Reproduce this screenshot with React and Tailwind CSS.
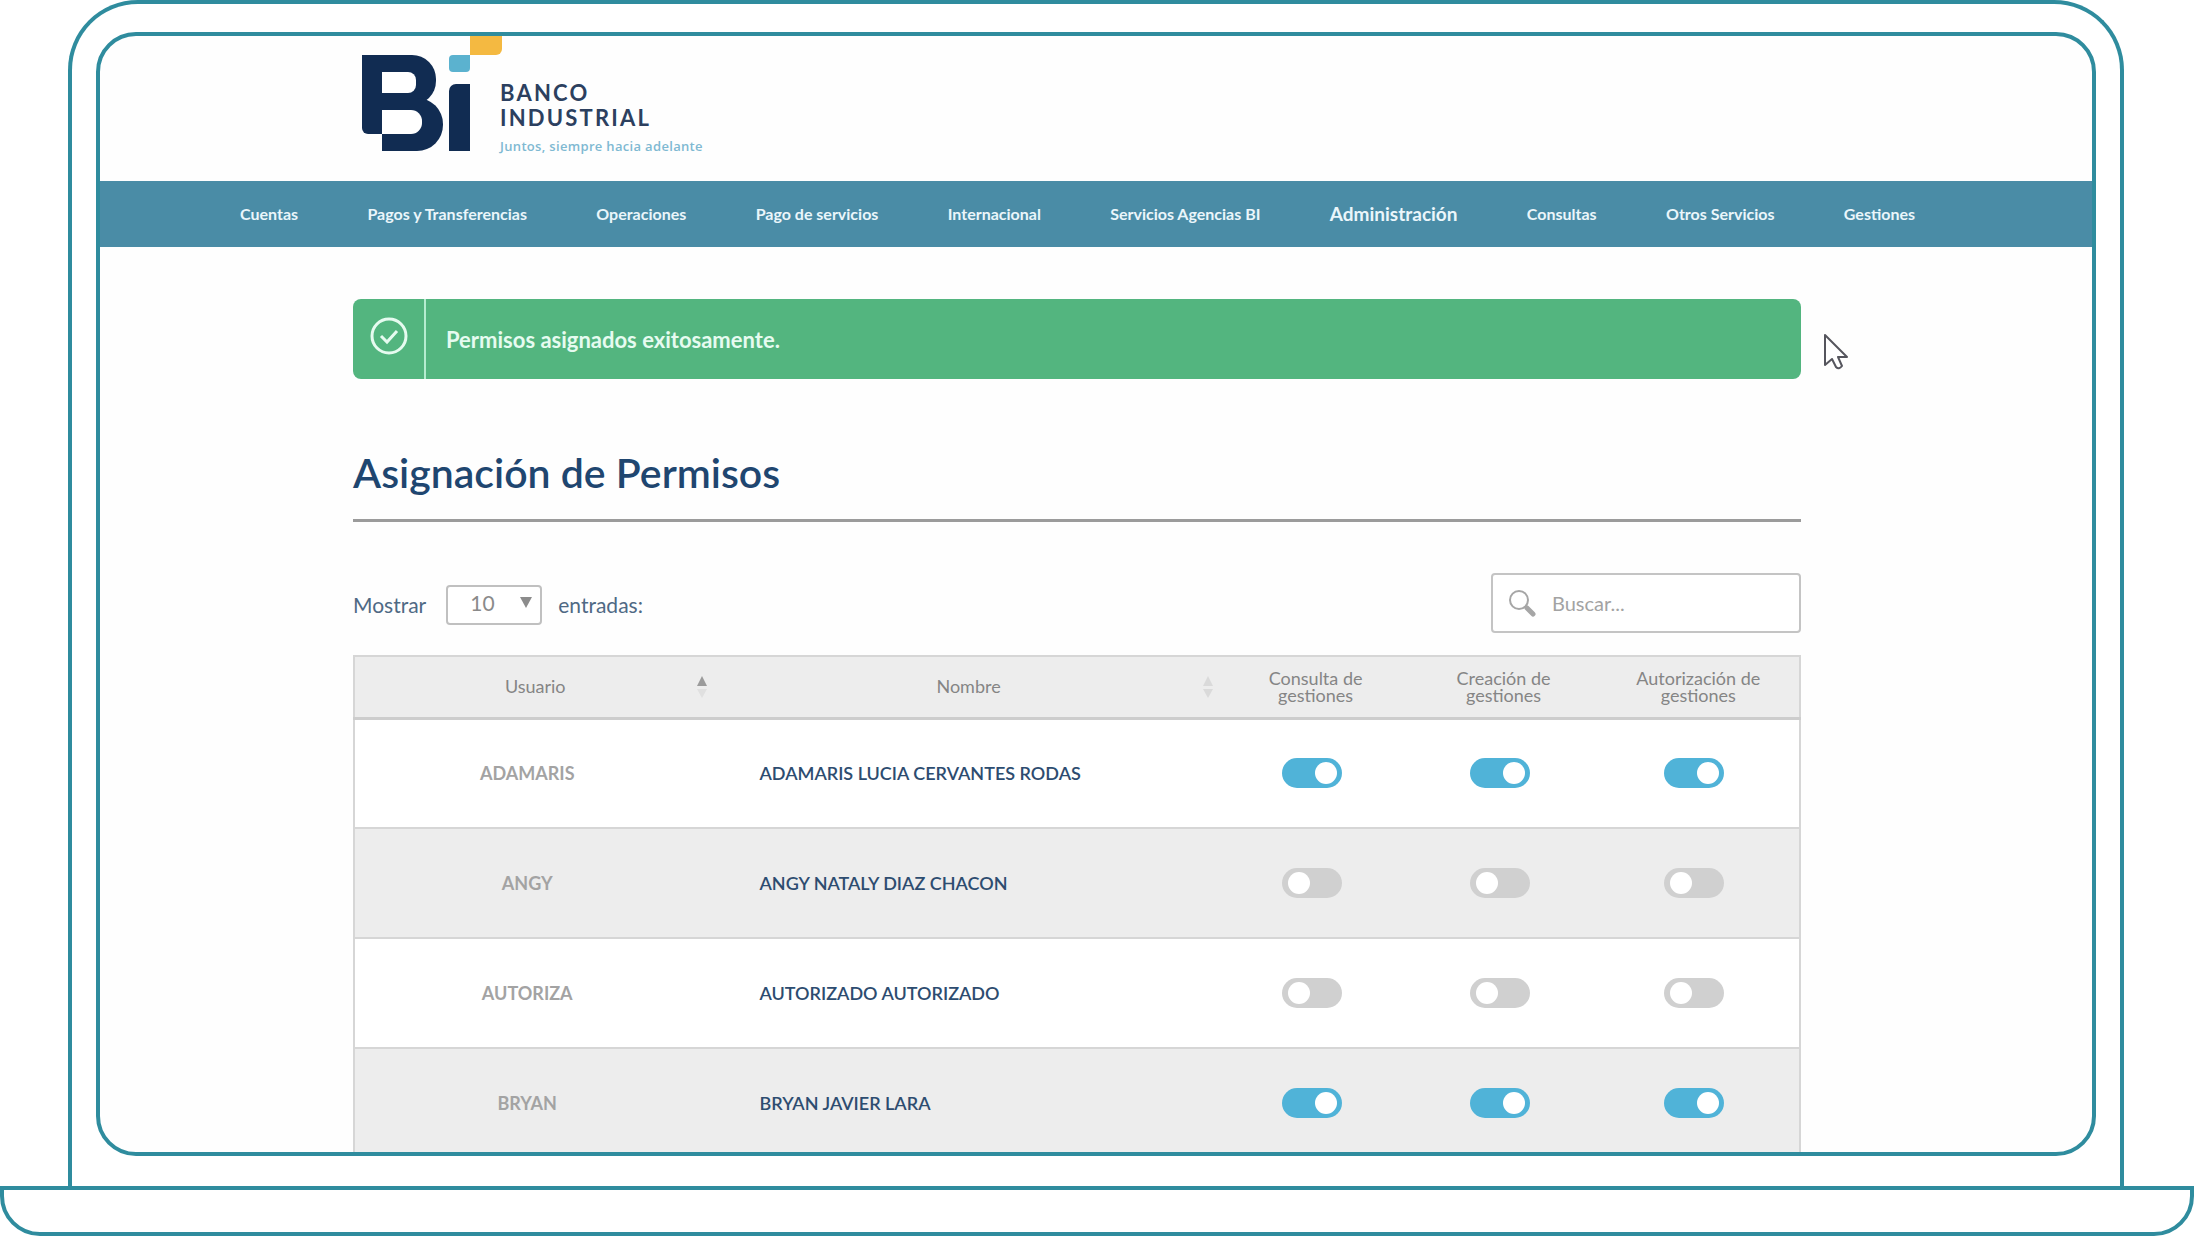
import React, { useState } from 'react';

const NAV_ITEMS = [
    'Cuentas',
    'Pagos y Transferencias',
    'Operaciones',
    'Pago de servicios',
    'Internacional',
    'Servicios Agencias BI',
    'Administración',
    'Consultas',
    'Otros Servicios',
    'Gestiones',
];

const PERMISSIONS = ['Consulta de gestiones', 'Creación de gestiones', 'Autorización de gestiones'];

const USERS = [
    { user: 'ADAMARIS', name: 'ADAMARIS LUCIA CERVANTES RODAS', access: [true, true, true] },
    { user: 'ANGY', name: 'ANGY NATALY DIAZ CHACON', access: [false, false, false] },
    { user: 'AUTORIZA', name: 'AUTORIZADO AUTORIZADO', access: [false, false, false] },
    { user: 'BRYAN', name: 'BRYAN JAVIER LARA', access: [true, true, true] },
];

const Logo = () => (
    <a href="#inicio" className="flex w-fit items-start">
        <svg width="140" height="116" viewBox="0 0 140 116" aria-hidden="true">
            <rect x="0" y="19" width="34" height="79" rx="6" fill="#112c52" />
            <rect x="0" y="19" width="20" height="30" fill="#112c52" />
            <rect x="20" y="19" width="54" height="50" rx="24" fill="#112c52" />
            <rect x="10" y="19" width="38" height="50" fill="#112c52" />
            <rect x="20" y="62" width="61" height="53" rx="26" fill="#112c52" />
            <rect x="20" y="62" width="34" height="53" fill="#112c52" />
            <rect x="20" y="36" width="34" height="21" rx="8" fill="#fff" />
            <rect x="20" y="36" width="18" height="21" fill="#fff" />
            <rect x="20" y="74" width="40" height="24" rx="11" fill="#fff" />
            <rect x="20" y="74" width="22" height="24" fill="#fff" />
            <rect x="87" y="48" width="21" height="67" rx="7" fill="#112c52" />
            <rect x="98" y="48" width="10" height="67" fill="#112c52" />
            <rect x="87" y="90" width="21" height="25" fill="#112c52" />
            <rect x="87" y="19" width="21" height="17" rx="4" fill="#5bb2cf" />
            <rect x="98" y="19" width="10" height="9" fill="#5bb2cf" />
            <rect x="108" y="-12" width="32" height="31" rx="6" fill="#f4b941" />
            <rect x="108" y="0" width="20" height="19" fill="#f4b941" />
        </svg>
        <span className="-ml-0.5 flex flex-col pt-[44px]">
            <span className="text-[22px] leading-[25px] font-bold tracking-widest text-[#2c405f]">BANCO</span>
            <span className="text-[22px] leading-[25px] font-bold tracking-widest text-[#2c405f]">INDUSTRIAL</span>
            <span className="mt-1.5 font-['Open_Sans',sans-serif] text-[13px] leading-5 font-semibold tracking-wide text-[#7fb9d2]">
                Juntos, siempre hacia adelante
            </span>
        </span>
    </a>
);

const SortArrows = ({ active }) => (
    <svg className="justify-self-end" width="12" height="24" viewBox="0 0 12 24" aria-hidden="true">
        <path d="M6 1l5 10H1z" fill={active ? '#9b9b9b' : '#dadada'} />
        <path d="M6 23L1 14h10z" fill={active ? '#e0e0e0' : '#dadada'} />
    </svg>
);

const SortHeader = ({ label, active }) => (
    <button type="button" className="grid w-full grid-cols-[24px_1fr_24px] items-center">
        <span className="col-start-2">{label}</span>
        <SortArrows active={active} />
    </button>
);

const Toggle = ({ label, checked, onChange }) => (
    <input
        type="checkbox"
        role="switch"
        aria-label={label}
        checked={checked}
        onChange={onChange}
        className="block h-[30px] w-[60px] cursor-pointer appearance-none rounded-full bg-[#d0d0d0] px-1.5 py-1 before:block before:size-[22px] before:rounded-full before:bg-white checked:bg-[#50b3d8] checked:pl-[33px]"
    />
);

const App = () => {
    const [users, setUsers] = useState(USERS);
    const [search, setSearch] = useState('');

    const toggleAccess = (user, index) => {
        setUsers(users.map((row) => (
            row.user === user
                ? { ...row, access: row.access.map((value, i) => (i === index ? !value : value)) }
                : row
        )));
    };

    const visible = users.filter((row) => row.name.includes(search.toUpperCase()));

    return (
        <div className="flex h-screen flex-col bg-white font-[Lato,sans-serif]">
            <div className="mr-[70px] ml-[68px] flex min-h-0 flex-1 flex-col rounded-t-[70px] border-4 border-b-0 border-[#2f8c9e] px-6 pt-7 pb-[30px]">
                <div className="min-h-0 flex-1 overflow-hidden rounded-[40px] border-4 border-[#2f8c9e] bg-[#fefefe]">
                    <header className="h-[145px] pl-[262px]">
                        <Logo />
                    </header>

                    <nav className="flex h-[66px] items-center justify-between bg-[#4a8ca6] pr-[177px] pl-[140px]">
                        {NAV_ITEMS.map((item) => (
                            <a
                                key={item}
                                href="#menu"
                                className={`font-bold whitespace-nowrap text-[#eaf6fb] ${item === 'Administración' ? 'text-[19px]' : 'text-base'}`}
                            >
                                {item}
                            </a>
                        ))}
                    </nav>

                    <main className="pt-[52px] pr-[291px] pl-[253px]">
                        <div className="relative">
                            <div role="status" className="flex h-20 rounded-lg bg-[#53b57f] text-[#e6fbf0]">
                                <div className="flex w-[73px] justify-center border-r-2 border-[#b5ecd0] pt-[18px]">
                                    <svg width="38" height="38" viewBox="0 0 38 38" fill="none" stroke="currentColor" strokeWidth="3" aria-hidden="true">
                                        <circle cx="19" cy="19" r="17" />
                                        <path d="M11 19l6 6 10-11" />
                                    </svg>
                                </div>
                                <p className="self-center pl-5 text-[22px] font-bold">Permisos asignados exitosamente.</p>
                            </div>
                            <svg className="absolute top-[34px] left-full ml-[22px]" width="26" height="38" viewBox="0 0 26 38" aria-hidden="true">
                                <path
                                    d="M2 2v30l7-6 4 8q3 3 6-1l-4-9h9z"
                                    fill="#fff"
                                    stroke="#55555d"
                                    strokeWidth="2"
                                    strokeLinejoin="round"
                                />
                            </svg>
                        </div>

                        <h1 className="mt-[68px] border-b-[3px] border-[#9b9b9b] pb-5 text-[41px] leading-[52px] font-semibold text-[#1f4670]">
                            Asignación de Permisos
                        </h1>

                        <div className="mt-[51px] flex h-[60px] items-center justify-between">
                            <div className="flex items-center pt-1 text-[21px] text-[#4f6984]">
                                <label htmlFor="page-size">Mostrar</label>
                                <div className="relative mr-4 ml-5">
                                    <select
                                        id="page-size"
                                        defaultValue="10"
                                        className="block h-10 w-24 appearance-none rounded border-2 border-[#c0c0c0] bg-white pb-1 pl-[22px] text-[#8a8a8a]"
                                    >
                                        <option>10</option>
                                        <option>25</option>
                                        <option>50</option>
                                    </select>
                                    <svg className="pointer-events-none absolute top-3 right-2.5" width="12" height="11" viewBox="0 0 12 11" aria-hidden="true">
                                        <path d="M0 0h12L6 11z" fill="#8c8c8c" />
                                    </svg>
                                </div>
                                <span>entradas:</span>
                            </div>

                            <label className="flex h-[60px] w-[310px] items-center gap-4 rounded border-2 border-[#c4c4c4] bg-white pr-4 pl-[15px] text-xl">
                                <svg width="28" height="28" viewBox="0 0 28 28" fill="none" stroke="#a6a6a6" aria-hidden="true">
                                    <circle cx="11" cy="11" r="9" strokeWidth="2" />
                                    <path d="M17 17l3 3" strokeWidth="3" />
                                    <path d="M19 19l6 6" strokeWidth="5" strokeLinecap="round" />
                                </svg>
                                <input
                                    type="text"
                                    aria-label="Buscar"
                                    placeholder="Buscar..."
                                    value={search}
                                    onChange={(e) => setSearch(e.target.value)}
                                    className="min-w-0 flex-1 text-[#555] outline-none placeholder:text-[#a3a3a3]"
                                />
                            </label>
                        </div>

                        <table className="mt-[22px] w-full table-fixed border-collapse border-2 border-[#d6d6d6] text-lg">
                            <thead>
                                <tr className="h-[62px] border-b-[3px] border-[#cdcdcd] bg-[#ededed] leading-[17px] text-[#858585]">
                                    <th className="w-[25%] px-2 py-0 font-normal">
                                        <SortHeader label="Usuario" active />
                                    </th>
                                    <th className="w-[35%] px-2 py-0 font-normal">
                                        <SortHeader label="Nombre" />
                                    </th>
                                    {PERMISSIONS.map((label) => (
                                        <th key={label} className="px-8 py-0 font-normal last:w-[14%]">{label}</th>
                                    ))}
                                </tr>
                            </thead>
                            <tbody>
                                {visible.map((row) => (
                                    <tr key={row.user} className="h-[110px] border-b-2 border-[#d6d6d6] bg-white even:bg-[#ededed]">
                                        <td className="pr-4 text-center font-bold text-[#a3a3a3]">{row.user}</td>
                                        <td className="pl-11 font-semibold text-[#2d4c70]">{row.name}</td>
                                        {row.access.map((value, i) => (
                                            <td key={PERMISSIONS[i]} className="pr-2">
                                                <div className="flex justify-center">
                                                    <Toggle
                                                        label={`${PERMISSIONS[i]}: ${row.name}`}
                                                        checked={value}
                                                        onChange={() => toggleAccess(row.user, i)}
                                                    />
                                                </div>
                                            </td>
                                        ))}
                                    </tr>
                                ))}
                            </tbody>
                        </table>
                    </main>
                </div>
            </div>
            <div className="h-[50px] shrink-0 rounded-b-[40px] border-4 border-[#2f8c9e]" />
        </div>
    );
};

export default App;
